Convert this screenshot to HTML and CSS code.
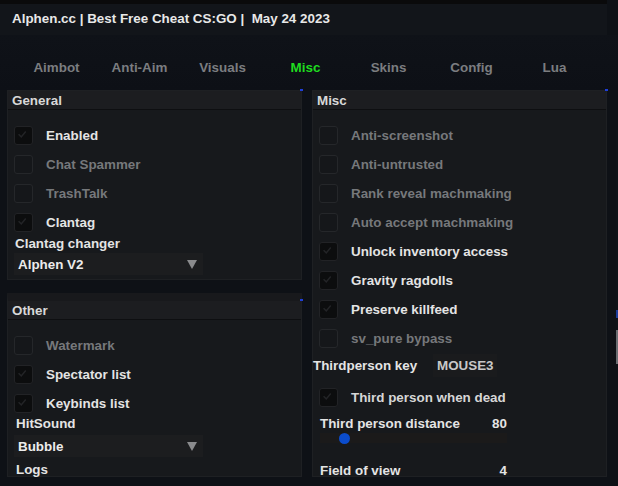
FILE: index.html
```html
<!DOCTYPE html>
<html>
<head>
<meta charset="utf-8">
<link rel="stylesheet" href="styles.css">
</head>
<body>
<div class="app">
  <div class="topbar"></div>
  <div class="titlebar">Alphen.cc | Best Free Cheat CS:GO |&nbsp; May 24 2023</div>
  <nav class="tabs">
    <span class="tab">Aimbot</span>
    <span class="tab">Anti-Aim</span>
    <span class="tab">Visuals</span>
    <span class="tab active">Misc</span>
    <span class="tab">Skins</span>
    <span class="tab">Config</span>
    <span class="tab">Lua</span>
  </nav>
  <div class="columns">
    <div class="col">
      <section class="panel general">
        <i class="corner"></i>
        <header class="phead">General</header>
        <div class="pbody">
          <div class="row"><span class="cb on"><svg viewBox="0 0 19 19"><path d="M4 8l3 3 5-6"/></svg></span><span class="lbl">Enabled</span></div>
          <div class="row off"><span class="cb"></span><span class="lbl">Chat Spammer</span></div>
          <div class="row off"><span class="cb"></span><span class="lbl">TrashTalk</span></div>
          <div class="row"><span class="cb on"><svg viewBox="0 0 19 19"><path d="M4 8l3 3 5-6"/></svg></span><span class="lbl">Clantag</span></div>
          <div class="field">Clantag changer</div>
          <div class="select"><span>Alphen V2</span><i class="tri"></i></div>
        </div>
      </section>
      <section class="panel other">
        <i class="corner"></i>
        <header class="phead">Other</header>
        <div class="pbody">
          <div class="row off"><span class="cb"></span><span class="lbl">Watermark</span></div>
          <div class="row"><span class="cb on"><svg viewBox="0 0 19 19"><path d="M4 8l3 3 5-6"/></svg></span><span class="lbl">Spectator list</span></div>
          <div class="row"><span class="cb on"><svg viewBox="0 0 19 19"><path d="M4 8l3 3 5-6"/></svg></span><span class="lbl">Keybinds list</span></div>
          <div class="field hs">HitSound</div>
          <div class="select s2"><span>Bubble</span><i class="tri"></i></div>
          <div class="field logs">Logs</div>
        </div>
      </section>
    </div>
    <div class="col">
      <section class="panel misc">
        <i class="corner"></i>
        <header class="phead">Misc</header>
        <div class="pbody">
          <div class="row off"><span class="cb"></span><span class="lbl">Anti-screenshot</span></div>
          <div class="row off"><span class="cb"></span><span class="lbl">Anti-untrusted</span></div>
          <div class="row off"><span class="cb"></span><span class="lbl">Rank reveal machmaking</span></div>
          <div class="row off"><span class="cb"></span><span class="lbl">Auto accept machmaking</span></div>
          <div class="row"><span class="cb on"><svg viewBox="0 0 19 19"><path d="M4 8l3 3 5-6"/></svg></span><span class="lbl">Unlock inventory access</span></div>
          <div class="row"><span class="cb on"><svg viewBox="0 0 19 19"><path d="M4 8l3 3 5-6"/></svg></span><span class="lbl">Gravity ragdolls</span></div>
          <div class="row"><span class="cb on"><svg viewBox="0 0 19 19"><path d="M4 8l3 3 5-6"/></svg></span><span class="lbl">Preserve killfeed</span></div>
          <div class="row off"><span class="cb"></span><span class="lbl">sv_pure bypass</span></div>
          <div class="keyrow"><span class="keylbl">Thirdperson key</span><span class="key">MOUSE3</span></div>
          <div class="row dead"><span class="cb on"><svg viewBox="0 0 19 19"><path d="M4 8l3 3 5-6"/></svg></span><span class="lbl">Third person when dead</span></div>
          <div class="slabel"><span>Third person distance</span><span>80</span></div>
          <div class="track"><i class="knob"></i></div>
          <div class="slabel fov"><span>Field of view</span><span>4</span></div>
        </div>
      </section>
    </div>
  </div>
  <div class="scroll"><i class="sb1"></i><i class="sb2"></i></div>
</div>
</body>
</html>
```

FILE: styles.css
```css
* { box-sizing: border-box; }
html, body { margin: 0; padding: 0; }
body {
  background: #0e1116;
  font-family: "Liberation Sans", Arial, sans-serif;
  font-weight: bold;
  font-size: 13.4px;
  color: #e4e4e4;
  width: 618px;
  height: 486px;
  overflow: hidden;
}
.app { position: relative; width: 618px; height: 486px; }
.topbar { height: 4px; width: 607px; background: #0a0a0b; }
.titlebar {
  height: 31px;
  width: 607px;
  background: #12151a;
  padding-left: 12px;
  line-height: 30px;
  color: #e8e8e8;
}
.tabs {
  display: flex;
  height: 55px;
  padding-left: 15px;
  padding-top: 24px;
  background: linear-gradient(#0f1218, #0d1016);
}
.tab {
  width: 83px;
  text-align: center;
  line-height: 18px;
  height: 18px;
  color: #7b7d80;
}
.tab.active { color: #1fdc1f; }
.columns {
  display: flex;
  gap: 10px;
  padding-left: 7px;
}
.col { display: flex; flex-direction: column; width: 295px; }
.panel {
  position: relative;
  background: #17191c;
  border: 1px solid #1e2023;
  width: 295px;
}
.corner {
  position: absolute;
  right: -2px;
  top: -2px;
  width: 3px;
  height: 2px;
  background: #1f3fd8;
}
.phead {
  height: 19px;
  line-height: 20px;
  padding-left: 4px;
  background: #1c1d20;
  border-bottom: 1px solid #0e0f11;
  color: #d8d8d8;
}
.general { height: 190px; }
.other { height: 184px; margin-top: 13px; border-top: 8px solid #18191c; }
.misc { height: 387px; }
.pbody { padding: 11px 6px 0 6px; display: flex; flex-direction: column; }
.row { display: flex; align-items: center; height: 29px; }
.cb {
  width: 19px;
  height: 19px;
  border: 1px solid #25272a;
  border-radius: 3px;
  background: #15171a;
  flex: none;
  display: flex;
}
.cb.on { background: #0c0d0e; border-color: #222326; }
.cb svg { width: 17px; height: 17px; }
.cb path { fill: none; stroke: #232427; stroke-width: 1.6; }
.lbl { margin-left: 13px; color: #e4e4e4; line-height: 15px; }
.row.off .lbl { color: #76787b; }
.row.dead .lbl { color: #d6d6d6; }
.field { height: 12px; line-height: 13px; margin-left: 1px; }
.select {
  margin-top: 4px;
  width: 189px;
  height: 22px;
  background: #1c1d1f;
  display: flex;
  align-items: center;
  justify-content: space-between;
  padding: 1px 6px 0 4px;
  color: #ececec;
}
.tri {
  width: 0; height: 0;
  border-left: 5px solid transparent;
  border-right: 5px solid transparent;
  border-top: 9px solid #8a8b8d;
  margin-right: 0;
}
.field.hs { margin-top: -1px; margin-left: 2px; }
.select.s2 { margin-top: 6px; }
.field.logs { margin-top: 6px; margin-left: 2px; }
.keyrow {
  display: flex;
  align-items: center;
  height: 24px;
  margin-left: -6px;
}
.keylbl { width: 120px; }
.key {
  height: 23px;
  width: 64px;
  line-height: 24px;
  padding-left: 4px;
  background: #1a1b1d;
  color: #c8c8c8;
}
.row.dead { margin-top: 6px; }
.slabel {
  display: flex;
  justify-content: space-between;
  width: 187px;
  height: 12px;
  line-height: 14px;
  margin-top: 5px;
  margin-left: 1px;
}
.track {
  position: relative;
  margin-top: 4px;
  width: 187px;
  height: 10px;
  background: #1b1a1a;
  margin-left: 1px;
}
.knob {
  position: absolute;
  left: 19px;
  top: 0;
  width: 11px;
  height: 11px;
  border-radius: 50%;
  background: #0b4ccc;
}
.slabel.fov { margin-top: 21px; }
.scroll {
  position: absolute;
  right: 0;
  top: 130px;
  width: 2px;
  height: 240px;
  background: #0f1318;
}
.sb1 {
  position: absolute; left: 0; top: 200px; width: 2px; height: 34px; background: #6a6d72;
}
.sb2 {
  position: absolute; left: 0; top: 180px; width: 2px; height: 8px; background: #1c3c9a;
}
```
